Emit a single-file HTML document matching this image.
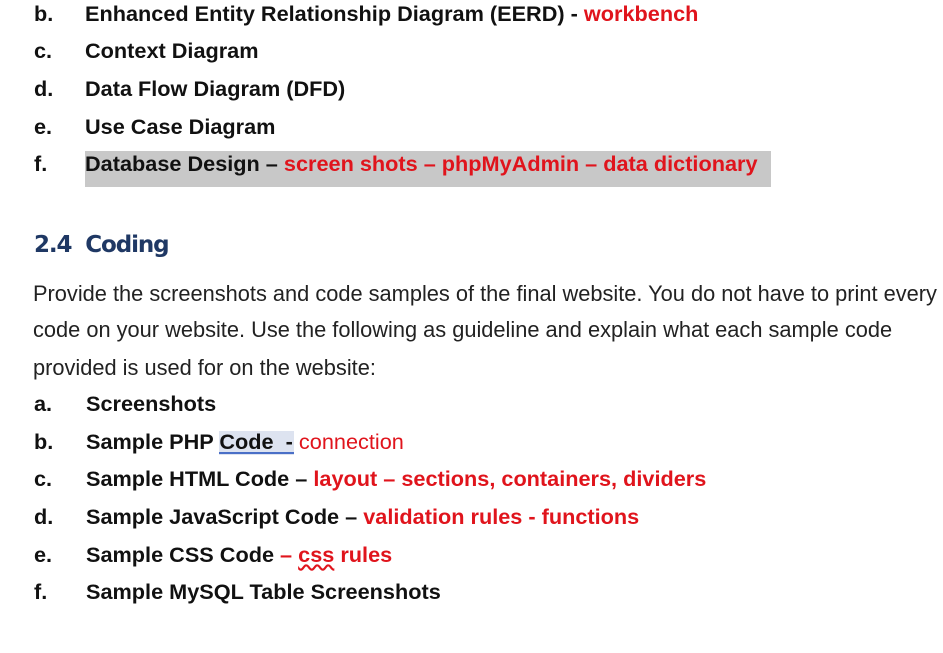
<!DOCTYPE html>
<html><head><meta charset="utf-8"><style>
body{margin:0;width:943px;height:653px;background:#fff;overflow:hidden;position:relative;font-family:"Liberation Sans",Arial,sans-serif;color:#111}
.l{position:absolute;line-height:26px;font-size:21.7px;white-space:nowrap}
.b{font-weight:bold}
.r{color:#e0141c}
.m{left:34px;font-weight:bold}
.t{left:85px;font-weight:bold}
.p{left:33px;font-size:21.8px;color:#222}
</style></head><body>
<div class="l m" style="top:1px">b.</div><div class="l t" style="top:1px">Enhanced Entity Relationship Diagram (EERD) - <span class="r">workbench</span></div>
<div class="l m" style="top:38px">c.</div><div class="l t" style="top:38px">Context Diagram</div>
<div class="l m" style="top:76px">d.</div><div class="l t" style="top:76px">Data Flow Diagram (DFD)</div>
<div class="l m" style="top:114px">e.</div><div class="l t" style="top:114px">Use Case Diagram</div>
<div style="position:absolute;left:85px;top:151px;width:686px;height:36px;background:#c8c8c8"></div>
<div class="l m" style="top:151px">f.</div><div class="l t" style="top:151px">Database Design – <span class="r">screen shots – phpMyAdmin – data dictionary</span></div>
<div class="l b" style="left:34px;top:232px;font-size:23px;color:#1f3864;font-family:'DejaVu Sans',sans-serif;letter-spacing:-1.1px">2.4&nbsp;&nbsp;Coding</div>
<div class="l p" style="top:281px">Provide the screenshots and code samples of the final website. You do not have to print every</div>
<div class="l p" style="top:317px">code on your website. Use the following as guideline and explain what each sample code</div>
<div class="l p" style="top:355px">provided is used for on the website:</div>
<div class="l m" style="top:391px">a.</div><div class="l t" style="top:391px;left:86px">Screenshots</div>
<div style="position:absolute;left:219px;top:431px;width:75px;height:24px;background:#dde3f0"></div>
<div style="position:absolute;left:219px;top:452px;width:75px;height:2px;background:#4a6fc7"></div>
<div class="l m" style="top:429px">b.</div><div class="l t" style="top:429px;left:86px">Sample PHP Code&nbsp; - <span class="r" style="font-weight:normal">connection</span></div>
<div class="l m" style="top:466px">c.</div><div class="l t" style="top:466px;left:86px">Sample HTML Code – <span class="r">layout – sections, containers, dividers</span></div>
<div class="l m" style="top:504px">d.</div><div class="l t" style="top:504px;left:86px">Sample JavaScript Code – <span class="r">validation rules - functions</span></div>
<div class="l m" style="top:542px">e.</div><div class="l t" style="top:542px;left:86px">Sample CSS Code <span class="r">– <span style="text-decoration:underline wavy #e0141c">css</span> rules</span></div>
<div class="l m" style="top:579px">f.</div><div class="l t" style="top:579px;left:86px">Sample MySQL Table Screenshots</div>
</body></html>
